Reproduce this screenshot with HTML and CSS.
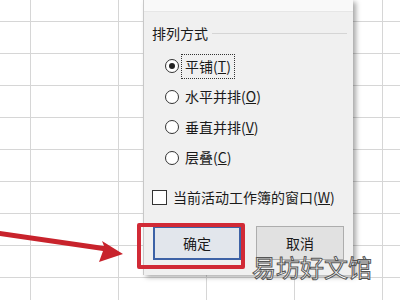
FILE: index.html
```html
<!DOCTYPE html>
<html lang="zh">
<head>
  <meta charset="UTF-8" />
  <title>重排窗口</title>
  <link rel="stylesheet" href="styles.css">
</head>
<body>
  <div class="sheet">
    <!-- Красная стрелка к кнопке -->
    <svg class="arrow" width="130" height="270" viewBox="0 0 130 270">
      <path d="M0 231 L104 246 L102 241 L123 254 L99 262 L103 251 L0 236 Z" fill="#c8232c"/>
    </svg>

    <div class="dialog">
      <div class="dialog-top"></div>
      <div class="dialog-body">
        <div class="group-title"><span>排列方式</span><span class="rule"></span></div>
        <div class="options">
          <div class="option"><span class="radio checked"></span><span class="label focus">平铺(<u>T</u>)</span></div>
          <div class="option"><span class="radio"></span><span class="label">水平并排(<u>O</u>)</span></div>
          <div class="option"><span class="radio"></span><span class="label">垂直并排(<u>V</u>)</span></div>
          <div class="option"><span class="radio"></span><span class="label">层叠(<u>C</u>)</span></div>
        </div>
        <div class="check"><span class="box"></span><span>当前活动工作簿的窗口(<u>W</u>)</span></div>
        <div class="actions">
          <button class="btn primary">确定</button>
          <button class="btn">取消</button>
        </div>
      </div>
      <div class="highlight"></div>
    </div>

    <div class="watermark">易坊好文馆</div>
  </div>
</body>
</html>
```

FILE: styles.css
```css
body {
  margin: 0;
  font-family: "Noto Sans CJK SC", "Noto Sans", sans-serif;
  color: #1a1a1a;
}

/* Сетка таблицы на фоне */
.sheet {
  position: relative;
  width: 400px;
  height: 300px;
  overflow: hidden;
  background-color: #fff;
  background-image:
    linear-gradient(to right, #d6d6d6 1px, transparent 1px),
    linear-gradient(to bottom, #d6d6d6 1px, transparent 1px);
  background-size: 88px 100%, 100% 32px;
  background-position: 30px 0, 0 21px;
}

.arrow {
  position: absolute;
  left: 0;
  top: 0;
}

/* Окно диалога */
.dialog {
  position: absolute;
  left: 143px;
  top: 0;
  width: 210px;
  height: 275px;
  background: #f0f0f0;
  box-shadow: 3px 2px 5px rgba(0, 0, 0, 0.35);
  border-left: 1px solid #c8c8c8;
  box-sizing: border-box;
}

.dialog-top {
  height: 11px;
  background: #f9f9f9;
  border-bottom: 1px solid #e6e6e6;
}

.dialog-body {
  padding: 11px 0 0 8px;
  font-size: 14px;
}

.group-title {
  display: flex;
  align-items: center;
  height: 20px;
  line-height: 20px;
}

.group-title .rule {
  flex: 1;
  height: 1px;
  background: #d5d5d5;
  margin: 0 6px 0 4px;
}

.options {
  margin-top: 8px;
  padding-left: 13px;
}

.option {
  display: flex;
  align-items: center;
  height: 30.5px;
}

.radio {
  width: 12px;
  height: 12px;
  border: 1px solid #333;
  border-radius: 50%;
  background: #fff;
  margin-right: 2px;
  position: relative;
}

.radio.checked::after {
  content: "";
  position: absolute;
  left: 3px;
  top: 3px;
  width: 6px;
  height: 6px;
  border-radius: 50%;
  background: #222;
}

.label {
  padding: 2px 3px;
  border: 1px dotted transparent;
  line-height: 19px;
}

.label.focus {
  border-color: #333;
}

.check {
  display: flex;
  align-items: center;
  margin-top: 14px;
  height: 20px;
}

.check .box {
  width: 13px;
  height: 13px;
  border: 1px solid #333;
  background: #fff;
  margin-right: 6px;
}

.actions {
  display: flex;
  gap: 15px;
  margin-top: 19px;
  padding-left: 1px;
}

.btn {
  width: 88px;
  height: 34px;
  font: inherit;
  font-size: 14px;
  color: #1a1a1a;
  background: #e1e1e1;
  border: 1px solid #adadad;
  padding: 0;
}

.btn.primary {
  background: #e2e6ec;
  border: 2px solid #3d62a6;
}

/* Красная рамка вокруг кнопки */
.highlight {
  position: absolute;
  left: -7px;
  top: 223px;
  width: 100px;
  height: 38px;
  border: 4px solid #d12a36;
  border-radius: 2px;
}

.watermark {
  position: absolute;
  left: 252px;
  top: 254px;
  font-size: 24px;
  line-height: 26px;
  color: #fff;
  -webkit-text-stroke: 1px #555;
}
```
